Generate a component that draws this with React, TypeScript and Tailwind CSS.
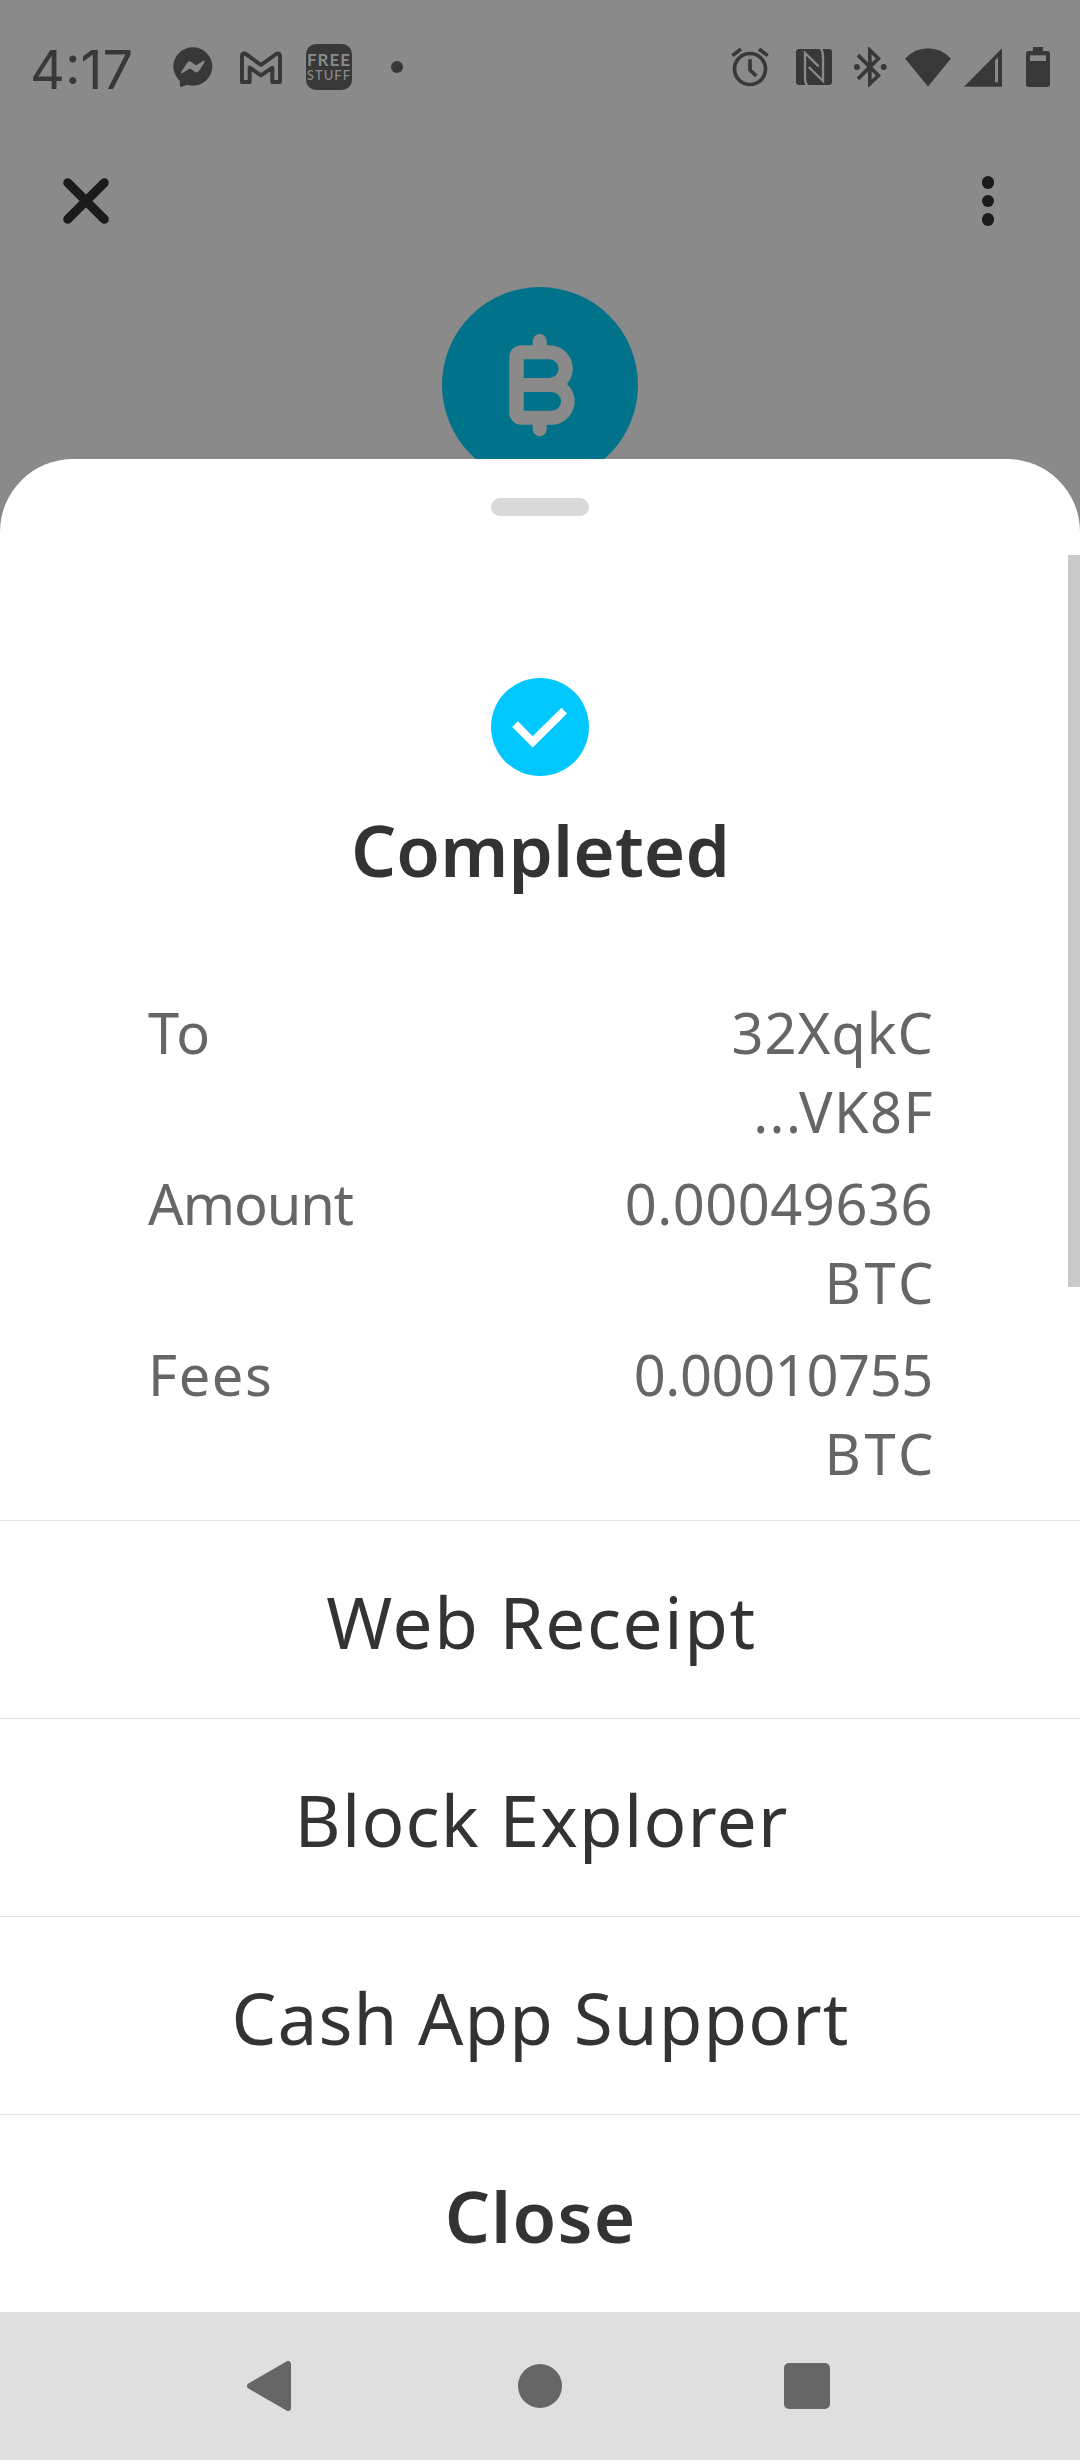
import { clsx } from "clsx";

interface DetailRow {
  label: string;
  labelClass: string;
  lines: { text: string; className: string }[];
}

const details: DetailRow[] = [
  {
    label: "To",
    labelClass: "tracking-[1px]",
    lines: [
      { text: "32XqkC", className: "tracking-[1px] -mr-[2px]" },
      { text: "...VK8F", className: "tracking-[1.4px] -mr-[2px]" },
    ],
  },
  {
    label: "Amount",
    labelClass: "tracking-[-1.1px]",
    lines: [
      { text: "0.00049636", className: "tracking-[0.5px] -mr-px" },
      { text: "BTC", className: "tracking-[3.6px] -mr-[5px]" },
    ],
  },
  {
    label: "Fees",
    labelClass: "tracking-[1.6px]",
    lines: [
      { text: "0.00010755", className: "tracking-[-0.4px] -mr-px" },
      { text: "BTC", className: "tracking-[3.6px] -mr-[5px]" },
    ],
  },
];

const actions = [
  { label: "Web Receipt", className: "pl-[3px] tracking-[1.6px]" },
  { label: "Block Explorer", className: "pl-[3px] tracking-[1.2px]" },
  { label: "Cash App Support", className: "pl-px tracking-[1.1px]" },
  { label: "Close", className: "pl-px font-semibold tracking-[1.2px]" },
];

function MessengerIcon() {
  return (
    <svg viewBox="0 0 120 120" className="h-10 w-10">
      <ellipse cx="59.5" cy="58.5" rx="58.5" ry="57.5" fill="#383838" />
      <path d="M20 90 L21 117 Q22 121 27 119 L50 110Z" fill="#383838" />
      <path d="M24 76 L42 48 Q48 39 55 45 L66 53 Q69 55 72 53 L92 41 Q97 40 95 45 L78 72 Q73 79 66 75 L54 66 Q51 64 48 66 L29 78 Q23 80 24 76Z" fill="#8a8a8a" />
    </svg>
  );
}

function GmailIcon() {
  return (
    <svg viewBox="0 0 126 99" className="h-[33px] w-[42px]" fill="none" stroke="#383838" strokeWidth="12" strokeLinejoin="round">
      <path d="M6 93 V16 Q6 5 16 8 L63 42 L110 8 Q120 5 120 16 V93 H97 V50 L63 73 L29 50 V93Z" />
    </svg>
  );
}

function AlarmIcon() {
  return (
    <svg viewBox="0 0 114 117" className="h-[39px] w-[38px]" fill="none" stroke="#383838" strokeWidth="11">
      <circle cx="57" cy="63" r="46.5" />
      <path d="M57 34 V66 L76 84" />
      <path d="M4 23 L30 3 M84 3 L110 23" />
    </svg>
  );
}

function NfcIcon() {
  return (
    <svg viewBox="0 0 108 108" className="h-9 w-9" fill="none">
      <rect width="108" height="108" rx="9" fill="#383838" />
      <g stroke="#8a8a8a" strokeWidth="7">
        <path d="M33 109 Q27 100 27 86 V12 L68 52" />
        <path d="M75 -1 Q81 8 81 22 V96 L38 54" />
      </g>
    </svg>
  );
}

function BluetoothIcon() {
  return (
    <svg viewBox="0 0 100 120" className="h-10 w-[33px]">
      <path d="M14 24 L76 86 L50 111 V9 L76 34 L14 96" transform="translate(-2 0)" fill="none" stroke="#383838" strokeWidth="11" />
      <circle cx="9" cy="60" r="9" fill="#383838" />
      <circle cx="90" cy="60" r="9" fill="#383838" />
    </svg>
  );
}

function WifiIcon() {
  return (
    <svg viewBox="0 0 138 116" className="h-[39px] w-[46px]" fill="#383838">
      <path d="M0 31 Q30 0 69 0 T138 31 L69 115Z" />
    </svg>
  );
}

function SignalIcon() {
  return (
    <svg viewBox="0 0 115 116" className="h-[39px] w-[38px]">
      <path d="M115 0 V116 H0Z" fill="#383838" />
      <path d="M94 36 L103 27 V103 H94Z" fill="#8a8a8a" />
    </svg>
  );
}

function BatteryIcon() {
  return (
    <svg viewBox="0 0 72 120" className="h-10 w-6">
      <path d="M21 0 H51 V12 H64 Q72 12 72 20 V112 Q72 120 64 120 H8 Q0 120 0 112 V20 Q0 12 8 12 H21Z" fill="#383838" />
      <path d="M12 25 H60 V42 H12Z" fill="#8a8a8a" />
    </svg>
  );
}

function StatusBar() {
  return (
    <div className="flex h-[134px] shrink-0 items-center justify-between pr-[30px] pl-[30px]">
      <div className="flex items-center">
        <span className="w-[143px] pt-[6px] font-['Inter',sans-serif] text-[54px] leading-none text-[#383838]">4:17</span>
        <MessengerIcon />
        <div className="ml-[27px]">
          <GmailIcon />
        </div>
        <div className="ml-[24px] flex h-[46px] w-[46px] flex-col items-center justify-center rounded-[10px] bg-[#383838] pt-px font-['Lato',sans-serif] text-[#8a8a8a]">
          <span className="text-[17px] leading-[16px] font-bold tracking-[1px]">FREE</span>
          <span className="text-[13px] leading-[15px] font-medium tracking-[1.1px]">STUFF</span>
        </div>
        <div className="ml-[39px] h-3 w-3 rounded-full bg-[#383838]" />
      </div>
      <div className="flex items-center">
        <AlarmIcon />
        <div className="ml-[27px]">
          <NfcIcon />
        </div>
        <div className="ml-[22px]">
          <BluetoothIcon />
        </div>
        <div className="ml-[18px]">
          <WifiIcon />
        </div>
        <div className="ml-[13px]">
          <SignalIcon />
        </div>
        <div className="ml-[24px]">
          <BatteryIcon />
        </div>
      </div>
    </div>
  );
}

function Toolbar() {
  return (
    <div className="flex h-[134px] shrink-0 items-center justify-between pr-[86px] pl-[63px]">
      <svg viewBox="0 0 46 46" className="h-[46px] w-[46px]" stroke="#1b1b1b" strokeWidth="9" strokeLinecap="round">
        <path d="M4.7 4.7 L41.3 41.3 M41.3 4.7 L4.7 41.3" />
      </svg>
      <div className="flex flex-col gap-[6px]">
        <div className="h-[12.5px] w-[12.5px] rounded-full bg-[#1b1b1b]" />
        <div className="h-[12.5px] w-[12.5px] rounded-full bg-[#1b1b1b]" />
        <div className="h-[12.5px] w-[12.5px] rounded-full bg-[#1b1b1b]" />
      </div>
    </div>
  );
}

function BitcoinBadge() {
  return (
    <div className="flex h-[191px] shrink-0 justify-center overflow-hidden pt-[19px]">
      <svg viewBox="0 0 196 196" className="h-[196px] w-[196px] shrink-0">
        <circle cx="98" cy="98" r="98" fill="#00728a" />
        <g fill="#8a8a8a">
          <path
            fillRule="evenodd"
            d="M79.3 58.3 H107.3 A23.35 23.35 0 0 1 125 97 A23.4 23.4 0 0 1 109.7 137.7 H79.3 A12 12 0 0 1 67.3 125.7 V70.3 A12 12 0 0 1 79.3 58.3Z M81.7 72.3 V91 H107.3 A9.35 9.35 0 0 0 107.3 72.3Z M81.7 105 V123.7 H109.7 A9.35 9.35 0 0 0 109.7 105Z"
          />
          <path d="M90.7 60 V54 A7 7 0 0 1 104.7 54 V60Z M90.7 136 V142.3 A7 7 0 0 0 104.7 142.3 V136Z" />
        </g>
      </svg>
    </div>
  );
}

function Details() {
  return (
    <div className="flex flex-col gap-[13px] px-[148px] pt-[103px] text-[56px] leading-[79px] text-[#666666]">
      {details.map((row) => (
        <div key={row.label} className="flex justify-between">
          <span className={row.labelClass}>{row.label}</span>
          <div className="flex flex-col items-end">
            {row.lines.map((line) => (
              <span key={line.text} className={line.className}>{line.text}</span>
            ))}
          </div>
        </div>
      ))}
    </div>
  );
}

function Sheet() {
  return (
    <div className="relative flex h-[1853px] shrink-0 flex-col rounded-t-[73px] bg-white">
      <div className="mx-auto mt-[39px] h-[18px] w-[98px] shrink-0 rounded-full bg-[#d9d9d9]" />
      <svg viewBox="0 0 98 98" className="mx-auto mt-[162px] h-[98px] w-[98px] shrink-0">
        <circle cx="49" cy="49" r="49" fill="#00c8ff" />
        <path d="M24 46.2 L41.7 63.9 L73.2 32.7" fill="none" stroke="#ffffff" strokeWidth="8" />
      </svg>
      <h1 className="mt-[34px] pl-px text-center text-[71px] leading-[80px] font-semibold tracking-[0.1px] text-[#333333]">Completed</h1>
      <Details />
      <div className="mt-auto flex flex-col">
        {actions.map((action) => (
          <button
            key={action.label}
            className={clsx("h-[198px] border-t border-[#e5e5e5] pt-[3px] text-[71px] leading-none text-[#333333]", action.className)}
          >
            {action.label}
          </button>
        ))}
      </div>
      <div className="absolute top-[96px] right-0 h-[732px] w-3 bg-[#c9c9c9]" />
    </div>
  );
}

function NavBar() {
  return (
    <div className="flex h-[148px] shrink-0 items-center bg-[#dfdfdf] pl-[247px]">
      <svg viewBox="0 0 44 50" className="h-[50px] w-[44px]" fill="#666666" stroke="#666666" strokeWidth="6" strokeLinejoin="round">
        <path d="M3 25 L41 3 V47Z" />
      </svg>
      <div className="ml-[227px] h-11 w-11 rounded-full bg-[#666666]" />
      <div className="ml-[222px] h-[46px] w-[46px] rounded-[5px] bg-[#666666]" />
    </div>
  );
}

export default function App() {
  return (
    <div className="flex h-[2460px] w-[1080px] flex-col overflow-hidden bg-[#8a8a8a] font-['Noto_Sans',sans-serif]">
      <StatusBar />
      <Toolbar />
      <BitcoinBadge />
      <Sheet />
      <NavBar />
    </div>
  );
}
